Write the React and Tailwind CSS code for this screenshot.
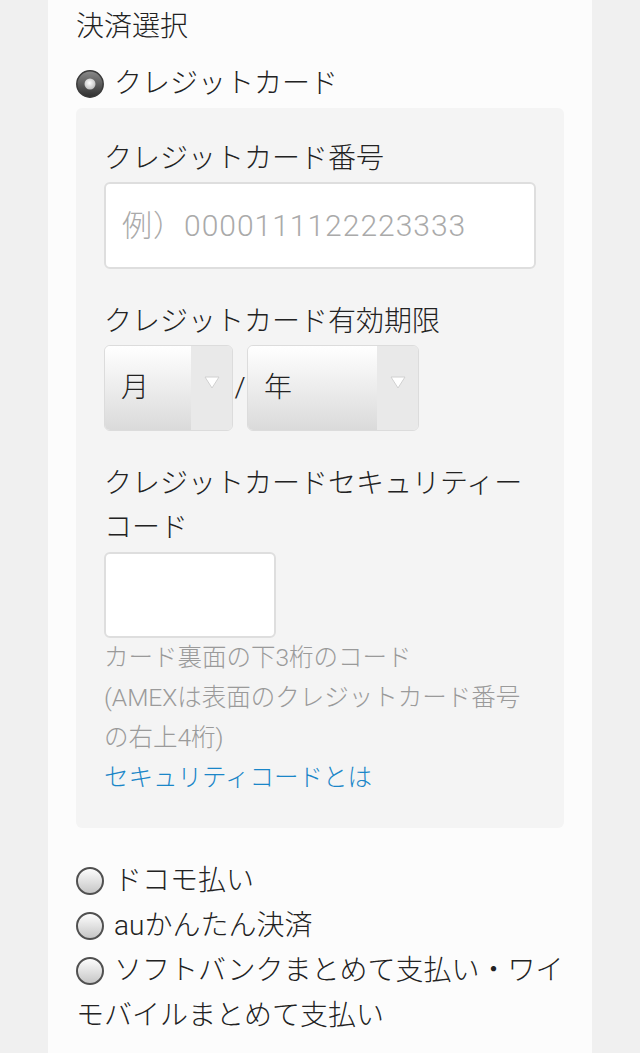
import React from "react";

const font = { fontFamily: 'Roboto, "Noto Sans CJK JP", sans-serif' };

function Radio({ checked }) {
  return (
    <svg width="28" height="28" viewBox="0 0 28 28" className="inline-block align-middle relative -top-[2px] mr-[10px]">
      <defs>
        <linearGradient id="ru" x1="0" y1="0" x2="0" y2="1">
          <stop offset="0" stopColor="#ffffff" />
          <stop offset="1" stopColor="#c4c4c4" />
        </linearGradient>
        <linearGradient id="rc" x1="0" y1="0" x2="0" y2="1">
          <stop offset="0" stopColor="#8a8a8a" />
          <stop offset="1" stopColor="#2e2e2e" />
        </linearGradient>
        <radialGradient id="rd" cx="0.45" cy="0.4" r="0.6">
          <stop offset="0" stopColor="#ffffff" />
          <stop offset="1" stopColor="#bdbdbd" />
        </radialGradient>
      </defs>
      {checked ? (
        <>
          <circle cx="14" cy="14" r="13.2" fill="url(#rc)" stroke="#3a3a3a" strokeWidth="1.5" />
          <circle cx="14" cy="14" r="5.5" fill="url(#rd)" />
        </>
      ) : (
        <circle cx="14" cy="14" r="13" fill="url(#ru)" stroke="#505050" strokeWidth="2" />
      )}
    </svg>
  );
}

function Arrow() {
  return (
    <svg width="16" height="13" viewBox="0 0 16 13">
      <path d="M1 1 L15 1 L8 12 Z" fill="#ffffff" stroke="#d0d0d0" strokeWidth="1" strokeLinejoin="round" />
    </svg>
  );
}

function Select({ label, width }) {
  return (
    <div className={`flex h-[86px] ${width} rounded-md border border-[#dcdcdc] overflow-hidden`}>
      <div className="flex-1 flex items-center pl-[16px] text-[28px] text-[#222] bg-[linear-gradient(to_bottom,#ffffff,#dadada)]">
        {label}
      </div>
      <div className="w-[41px] bg-[#e9e9e9] flex items-start justify-center pt-[30px]">
        <Arrow />
      </div>
    </div>
  );
}

export default function App() {
  return (
    <div className="min-h-screen bg-[#f0f0f0] px-12 font-light" style={font}>
      <div className="bg-[#fcfcfc] px-7 pt-[4px] pb-[12px] min-h-[1053px]">
        <div className="text-[28px] leading-[46px] text-[#222]">決済選択</div>
        <div className="mt-[11px] text-[28px] leading-[46px] text-[#222]">
          <Radio checked />
          クレジットカード
        </div>
        <div className="mt-[1px] bg-[#f4f4f4] rounded-md px-7 pt-[29px] pb-[30px]">
          <div className="text-[28px] leading-[44px] text-[#222]">クレジットカード番号</div>
          <div className="mt-[1px] h-[87px] rounded-md border-2 border-[#dedede] bg-white flex items-center pl-[16px] text-[30px] tracking-[1px] text-[#aaaaaa]">
            例）0000111122223333
          </div>
          <div className="mt-[31px] text-[28px] leading-[44px] text-[#222]">クレジットカード有効期限</div>
          <div className="mt-[1px] flex items-center">
            <Select label="月" width="w-[129px]" />
            <div className="w-[14px] text-center text-[28px] text-[#222]">/</div>
            <Select label="年" width="w-[172px]" />
          </div>
          <div className="mt-[31px] text-[28px] leading-[44px] text-[#222]">
            クレジットカードセキュリティー
            <br />
            コード
          </div>
          <div className="mt-[2px] h-[86px] w-[172px] rounded-md border-2 border-[#dedede] bg-white"></div>
          <div className="text-[24.5px] leading-[40px] text-[#9a9a9a]">
            カード裏面の下3桁のコード
            <br />
            (AMEXは表面のクレジットカード番号
            <br />
            の右上4桁)
          </div>
          <div className="text-[24.5px] leading-[40px] text-[#1a86c8]">セキュリティコードとは</div>
        </div>
        <div className="mt-[30px] text-[28px] leading-[45px] text-[#222]">
          <div>
            <Radio />
            ドコモ払い
          </div>
          <div>
            <Radio />
            auかんたん決済
          </div>
          <div>
            <Radio />
            ソフトバンクまとめて支払い・ワイモバイルまとめて支払い
          </div>
        </div>
      </div>
    </div>
  );
}
